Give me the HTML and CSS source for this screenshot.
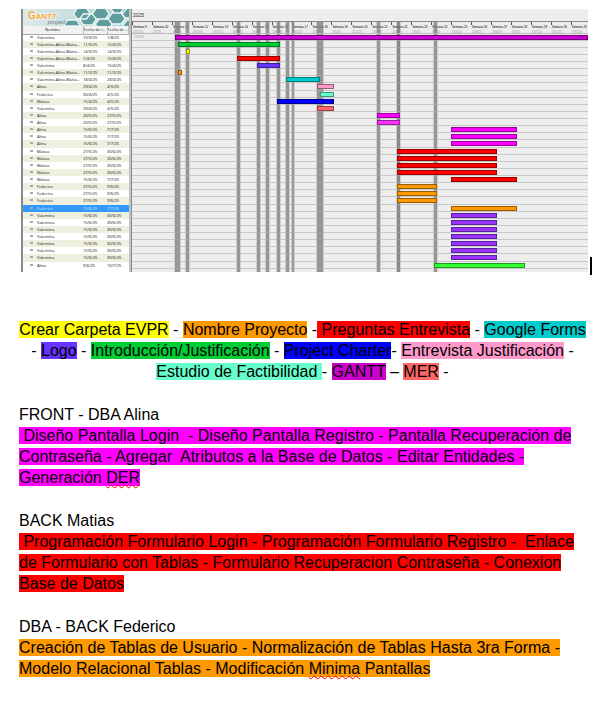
FILE: index.html
```html
<!DOCTYPE html>
<html lang="es">
<head>
<meta charset="utf-8">
<title>Diagrama de Gantt</title>
<link rel="stylesheet" href="styles.css">
</head>
<body>
<main>
<div class="figure-line">
<figure class="gantt">
<section class="tasks">
<svg class="logo" viewBox="0 0 107 17" preserveAspectRatio="none" role="img" aria-label="Gantt project">
<defs><linearGradient id="sky" x1="0" x2="1"><stop offset="0" stop-color="#dbe9ea"/><stop offset=".45" stop-color="#c9dfe0"/><stop offset="1" stop-color="#a9cfd0"/></linearGradient></defs>
<rect width="107" height="17" fill="url(#sky)"/>
<g fill="#5f9c9e" stroke="#eef7f7" stroke-width="1.3">
<path d="M41 17l4-6h9l4 6zM51 5l4-6h9l4 6-4 5h-9zM57 10l4-5h9l4 5-4 6h-9zM70 5l4-6h9l4 6-4 5h-9zM73 15l4-5h9l4 5-4 6h-9zM86 10l4-6h9l4 6-4 5h-9zM88 -1l4-5h9l4 5-4 5h-9zM99 3l4-5h8v11h-8zM101 16l4-5h8v10h-8zM58 20l4-4h9l4 4z"/>
</g>
<text class="logo-main" x="5" y="10"><tspan class="logo-cap">G</tspan>ANTT</text>
<text class="logo-sub" x="25" y="15">project</text>
</svg>
<table>
<thead><tr><th>Nombre</th><th>Fecha de i...</th><th>Fecha de ...</th></tr></thead>
<tbody>
<tr><td>Valentina</td><td>10/3/25</td><td>1/8/25</td></tr>
<tr><td>Valentina-Alina-Matia...</td><td>11/3/25</td><td>15/4/25</td></tr>
<tr><td>Valentina-Alina-Matia...</td><td>14/3/25</td><td>14/3/25</td></tr>
<tr><td>Valentina-Alina-Matia...</td><td>1/4/25</td><td>15/4/25</td></tr>
<tr><td>Valentina</td><td>8/4/25</td><td>15/4/25</td></tr>
<tr><td>Valentina-Alina-Matia...</td><td>11/3/25</td><td>11/3/25</td></tr>
<tr><td>Valentina-Alina-Matia...</td><td>18/4/25</td><td>29/4/25</td></tr>
<tr><td>Alina</td><td>29/4/25</td><td>4/5/25</td></tr>
<tr><td>Federico</td><td>30/4/25</td><td>4/5/25</td></tr>
<tr><td>Matias</td><td>15/4/25</td><td>4/5/25</td></tr>
<tr><td>Valentina</td><td>29/4/25</td><td>4/5/25</td></tr>
<tr><td>Alina</td><td>20/5/25</td><td>27/5/25</td></tr>
<tr><td>Alina</td><td>20/5/25</td><td>27/5/25</td></tr>
<tr><td>Alina</td><td>15/6/25</td><td>7/7/25</td></tr>
<tr><td>Alina</td><td>15/6/25</td><td>7/7/25</td></tr>
<tr><td>Alina</td><td>15/6/25</td><td>7/7/25</td></tr>
<tr><td>Matias</td><td>27/5/25</td><td>30/6/25</td></tr>
<tr><td>Matias</td><td>27/5/25</td><td>30/6/25</td></tr>
<tr><td>Matias</td><td>27/5/25</td><td>30/6/25</td></tr>
<tr><td>Matias</td><td>27/5/25</td><td>30/6/25</td></tr>
<tr><td>Matias</td><td>15/6/25</td><td>7/7/25</td></tr>
<tr><td>Federico</td><td>27/5/25</td><td>9/6/25</td></tr>
<tr><td>Federico</td><td>27/5/25</td><td>9/6/25</td></tr>
<tr><td>Federico</td><td>27/5/25</td><td>9/6/25</td></tr>
<tr class="selected"><td>Federico</td><td>15/6/25</td><td>7/7/25</td></tr>
<tr><td>Valentina</td><td>15/6/25</td><td>30/6/25</td></tr>
<tr><td>Valentina</td><td>15/6/25</td><td>30/6/25</td></tr>
<tr><td>Valentina</td><td>15/6/25</td><td>30/6/25</td></tr>
<tr><td>Valentina</td><td>15/6/25</td><td>30/6/25</td></tr>
<tr><td>Valentina</td><td>15/6/25</td><td>30/6/25</td></tr>
<tr><td>Valentina</td><td>15/6/25</td><td>30/6/25</td></tr>
<tr><td>Valentina</td><td>15/6/25</td><td>30/6/25</td></tr>
<tr><td>Alina</td><td>9/6/25</td><td>10/7/25</td></tr>
</tbody>
</table>
</section>
<section class="chart">
<div class="year">2025</div>
<ol class="weeks">
<li>Semana 9<small>23/2/25</small></li>
<li>Semana 10<small>2/3/25</small></li>
<li>Semana 11<small>9/3/25</small></li>
<li>Semana 12<small>16/3/25</small></li>
<li>Semana 13<small>23/3/25</small></li>
<li>Semana 14<small>30/3/25</small></li>
<li>Semana 15<small>6/4/25</small></li>
<li>Semana 16<small>13/4/25</small></li>
<li>Semana 17<small>20/4/25</small></li>
<li>Semana 18<small>27/4/25</small></li>
<li>Semana 19<small>4/5/25</small></li>
<li>Semana 20<small>11/5/25</small></li>
<li>Semana 21<small>18/5/25</small></li>
<li>Semana 22<small>25/5/25</small></li>
<li>Semana 23<small>1/6/25</small></li>
<li>Semana 24<small>8/6/25</small></li>
<li>Semana 25<small>15/6/25</small></li>
<li>Semana 26<small>22/6/25</small></li>
<li>Semana 27<small>29/6/25</small></li>
<li>Semana 28<small>6/7/25</small></li>
<li>Semana 29<small>13/7/25</small></li>
<li>Semana 30<small>20/7/25</small></li>
<li>Semana 31<small>27/7/25</small></li>
</ol>
<!-- --s and --e: first and last day, counted from 23/2/25 -->
<div class="marks">
<i style="--s:15;--e:17"></i><i style="--s:19;--e:20"></i><i style="--s:37;--e:38"></i><i style="--s:44;--e:45"></i><i style="--s:47;--e:48"></i><i style="--s:51;--e:52"></i><i style="--s:54;--e:55"></i><i style="--s:56;--e:57"></i><i style="--s:65;--e:67"></i><i style="--s:86;--e:87"></i><i class="dark" style="--s:93;--e:94"></i><i style="--s:106;--e:107"></i>
</div>
<div class="rows">
<div><span class="start">21/2/25</span><b class="purple" style="--s:15;--e:160"></b></div>
<div><b class="green" style="--s:16;--e:52"></b></div>
<div><b class="yellow" style="--s:19;--e:20"></b></div>
<div><b class="red" style="--s:37;--e:52"></b></div>
<div><b class="indigo" style="--s:44;--e:52"></b></div>
<div><b class="orange" style="--s:16;--e:17"></b></div>
<div><b class="teal" style="--s:54;--e:66"></b></div>
<div><b class="pink" style="--s:65;--e:71"></b></div>
<div><b class="aqua" style="--s:66;--e:71"></b></div>
<div><b class="blue" style="--s:51;--e:71"></b></div>
<div><b class="coral" style="--s:65;--e:71"></b></div>
<div><b class="magenta" style="--s:86;--e:94"></b></div>
<div><b class="orchid" style="--s:86;--e:94"></b></div>
<div><b class="magenta" style="--s:112;--e:135"></b></div>
<div><b class="magenta" style="--s:112;--e:135"></b></div>
<div><b class="magenta" style="--s:112;--e:135"></b></div>
<div><b class="red" style="--s:93;--e:128"></b></div>
<div><b class="red" style="--s:93;--e:128"></b></div>
<div><b class="red" style="--s:93;--e:128"></b></div>
<div><b class="red" style="--s:93;--e:128"></b></div>
<div><b class="red" style="--s:112;--e:135"></b></div>
<div><b class="orange" style="--s:93;--e:107"></b></div>
<div><b class="orange" style="--s:93;--e:107"></b></div>
<div><b class="orange" style="--s:93;--e:107"></b></div>
<div><b class="orange" style="--s:112;--e:135"></b></div>
<div><b class="violet" style="--s:112;--e:128"></b></div>
<div><b class="violet" style="--s:112;--e:128"></b></div>
<div><b class="violet" style="--s:112;--e:128"></b></div>
<div><b class="violet" style="--s:112;--e:128"></b></div>
<div><b class="violet" style="--s:112;--e:128"></b></div>
<div><b class="violet" style="--s:112;--e:128"></b></div>
<div><b class="violet" style="--s:112;--e:128"></b></div>
<div><b class="lime" style="--s:106;--e:138"></b></div>
</div>
</section>
</figure>
<span class="caret"></span>
</div>
<article class="text">
<p class="legend"><mark class="yellow">Crear Carpeta EVPR</mark> - <mark class="orange">Nombre Proyecto</mark> -<mark class="red">&nbsp;Preguntas Entrevista</mark> - <mark class="teal">Google Forms</mark> - <mark class="indigo">Logo</mark> - <mark class="green">Introducción/Justificación</mark> - <mark class="blue">Project Charter</mark>- <mark class="pink">Entrevista Justificación</mark> - <mark class="aqua">Estudio de Factibilidad&nbsp;</mark>- <mark class="purple">GANTT</mark> – <mark class="coral">MER</mark> -</p>
<section>
<h2>FRONT - DBA Alina</h2>
<p><mark class="magenta">&nbsp;Diseño Pantalla Login&nbsp; - Diseño Pantalla Registro - Pantalla Recuperación de Contraseña - Agregar&nbsp; Atributos a la Base de Datos - Editar Entidades - Generación <span class="typo">DER</span></mark></p>
</section>
<section>
<h2>BACK Matias</h2>
<p><mark class="red">&nbsp;Programación Formulario Login - Programación Formulario Registro -&nbsp; Enlace de Formulario con Tablas - Formulario Recuperacion Contraseña - Conexion Base de Datos</mark></p>
</section>
<section>
<h2>DBA - BACK Federico</h2>
<p><mark class="orange">Creación de Tablas de Usuario - Normalización de Tablas Hasta 3ra Forma - Modelo Relacional Tablas - Modificación <span class="typo">Minima</span> Pantallas</mark></p>
</section>
</article>
</main>
</body>
</html>
```
FILE: styles.css
```css
* { box-sizing: border-box; }
body { margin: 0; background: #fff; color: #000; font-family: "Liberation Sans", Arial, sans-serif; }
main { padding: 9px 18px 40px 21px; }

.yellow { background-color: #ff0; }
.orange { background-color: #f90; }
.red { background-color: #f00; }
.teal { background-color: #0cc; }
.indigo { background-color: #63f; }
.green { background-color: #0c3; }
.blue { background-color: #00f; }
.pink { background-color: #f9c; }
.aqua { background-color: #6fc; }
.purple { background-color: #c0c; }
.coral { background-color: #f66; }
.magenta { background-color: #f0f; }
.orchid { background-color: #f3f; }
.violet { background-color: #93f; }
.lime { background-color: #3f3; }

/* Gantt figure */
.figure-line { display: flex; align-items: flex-end; gap: 2px; }
.gantt { flex: 1; min-width: 0; display: flex; margin: 0 0 3px; font-size: 4px; }
.caret { width: 2px; height: 18px; background: #000; }

.tasks { flex: none; width: 110px; border-left: 2px solid #8a8a8a; border-right: 2px solid #c4c4c4; background: #fff; }
.logo { display: block; width: 100%; height: 17px; }
.logo-main { font-size: 8px; font-weight: bold; fill: #f7a531; stroke: #fff; stroke-width: 1px; paint-order: stroke; }
.logo-cap { font-size: 10px; }
.logo-sub { font-size: 6px; font-style: italic; fill: #777; }
table { width: 100%; border-collapse: collapse; table-layout: fixed; line-height: 6px; font-family: "Open Sans", "Liberation Sans", sans-serif; }
th, td { padding: 0; white-space: nowrap; overflow: hidden; text-align: left; color: #111; }
th { height: 8px; background: #f2f2f2; border-bottom: 1px solid #aaa; border-right: 1px solid #bbb; font-weight: normal; }
th:first-child { width: 60px; text-align: center; }
th:nth-child(2) { width: 24px; }
td { height: 7px; }
td:first-child { padding-left: 14px; }
td:first-child::before { content: ""; display: inline-block; width: 3px; height: 2px; margin: 0 4px 1px -7px; background: #aaa; vertical-align: middle; }
tbody tr:nth-child(8n) td { height: 8px; }
tbody tr:nth-child(even) { background: #efefdf; }
tbody .selected { background: #39f; }
.selected td { color: #cde4ff; }

.chart { flex: 1; min-width: 0; position: relative; overflow: hidden; background: #ededed; border-left: 1px solid #888; padding-bottom: 3px; }
.year { height: 13px; padding: 3px 1px 0; border-bottom: 1px solid #888; font-size: 5px; line-height: 6px; color: #333; }
.weeks { display: grid; grid-auto-flow: column; grid-auto-columns: calc(700% / 160); height: 12px; margin: 0; padding: 0; list-style: none; font-size: 3px; }
.weeks li { padding: 3px 0 0 1px; line-height: 5px; white-space: nowrap; color: #000; background: linear-gradient(#555, #555) 0 0 / 1px 3px no-repeat; }
.weeks small { display: block; font-size: 3px; line-height: 4px; color: #999; }
.marks { position: absolute; top: 13px; right: 0; bottom: 0; left: 0; }
.marks i { position: absolute; top: 0; bottom: 0; left: calc(var(--s) * 100% / 160); width: calc((var(--e) - var(--s)) * 100% / 160); background: #808080cc; outline: 1px solid #80808044; }
.marks .dark { background: #6e6e6ecc; }
.rows { position: relative; border-top: 1px solid #bbb; margin-top: -1px; }
.rows div { display: flex; height: 7px; padding-top: 1px; border-bottom: 1px solid #a9a9a988; }
.rows div:nth-child(8n) { height: 8px; }
.rows b { height: 5px; min-width: 4px; margin-left: calc(var(--s) * 100% / 160); width: calc((var(--e) - var(--s)) * 100% / 160); border: 1px solid #0006; }
.start { position: absolute; padding-left: 2px; font-size: 3px; line-height: 5px; color: #999; }

/* Document text */
.text { display: flex; flex-direction: column; gap: 22px; margin: 44px 6px 0 -2px; font-size: 16px; line-height: 21px; }
.text p, .text h2 { margin: 0; font-size: 16px; font-weight: normal; }
.legend { text-align: center; }
mark { color: #000; }
.typo { text-decoration: underline wavy #e00 1px; text-decoration-skip-ink: none; text-underline-offset: 1px; }
```
